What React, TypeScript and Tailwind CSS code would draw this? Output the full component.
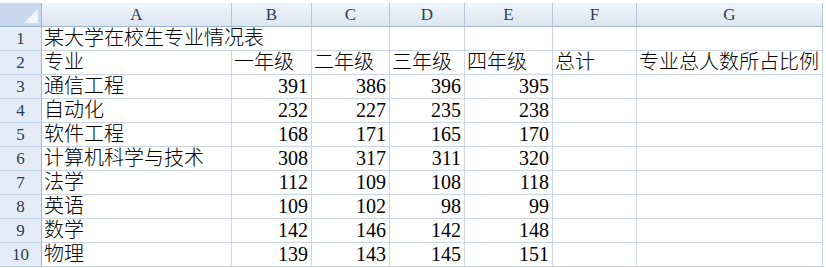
import React from 'react';

const cols = ['A', 'B', 'C', 'D', 'E', 'F', 'G'];

const rows: [string, number, number, number, number][] = [
  ['通信工程', 391, 386, 396, 395],
  ['自动化', 232, 227, 235, 238],
  ['软件工程', 168, 171, 165, 170],
  ['计算机科学与技术', 308, 317, 311, 320],
  ['法学', 112, 109, 108, 118],
  ['英语', 109, 102, 98, 99],
  ['数学', 142, 146, 142, 148],
  ['物理', 139, 143, 145, 151],
];

const font = { fontFamily: '"Liberation Serif", "Noto Sans CJK SC", serif' };

function RowHead({ n }: { n: number }) {
  return (
    <div className="h-6 flex items-center justify-center bg-[#e4ecf7] border-r border-r-[#9eb6ce] border-b border-b-[#c5d3e6] text-[17px] text-[#2b3d4f]">
      {n}
    </div>
  );
}

function Cell({ children, right, span }: { children?: React.ReactNode; right?: boolean; span?: boolean }) {
  return (
    <div
      className={`h-6 flex items-end overflow-visible whitespace-nowrap border-r border-b border-[#cdd5e3] text-[20px] leading-[23px] font-light text-black ${
        right ? 'justify-end pr-[3px]' : 'pl-[2px]'
      } ${span ? 'col-span-2' : ''}`}
    >
      {children}
    </div>
  );
}

export default function App() {
  return (
    <div className="w-[826px] h-[268px] bg-white pt-[3px] overflow-hidden" style={font}>
      <div className="grid grid-cols-[42px_190px_80px_78px_75px_88px_84px_186px] w-[823px]">
        <div className="h-6 relative bg-[#c8d8ee] border-r border-b border-[#9eb6ce]">
          <div className="absolute right-[3px] bottom-[3px] w-0 h-0 border-l-[14px] border-l-transparent border-b-[14px] border-b-[#f3f7fc]" />
        </div>
        {cols.map((c) => (
          <div
            key={c}
            className="h-6 flex items-center justify-center bg-linear-to-b from-[#f1f5fb] to-[#dce5f1] border-r border-r-[#b2c4dc] border-b border-b-[#9eb6ce] text-[17px] text-[#2b3d4f]"
          >
            {c}
          </div>
        ))}

        <RowHead n={1} />
        <Cell span>某大学在校生专业情况表</Cell>
        <Cell />
        <Cell />
        <Cell />
        <Cell />
        <Cell />

        <RowHead n={2} />
        <Cell>专业</Cell>
        <Cell>一年级</Cell>
        <Cell>二年级</Cell>
        <Cell>三年级</Cell>
        <Cell>四年级</Cell>
        <Cell>总计</Cell>
        <Cell>专业总人数所占比例</Cell>

        {rows.map((r, i) => (
          <React.Fragment key={r[0]}>
            <RowHead n={i + 3} />
            <Cell>{r[0]}</Cell>
            <Cell right>{r[1]}</Cell>
            <Cell right>{r[2]}</Cell>
            <Cell right>{r[3]}</Cell>
            <Cell right>{r[4]}</Cell>
            <Cell />
            <Cell />
          </React.Fragment>
        ))}
      </div>
    </div>
  );
}
